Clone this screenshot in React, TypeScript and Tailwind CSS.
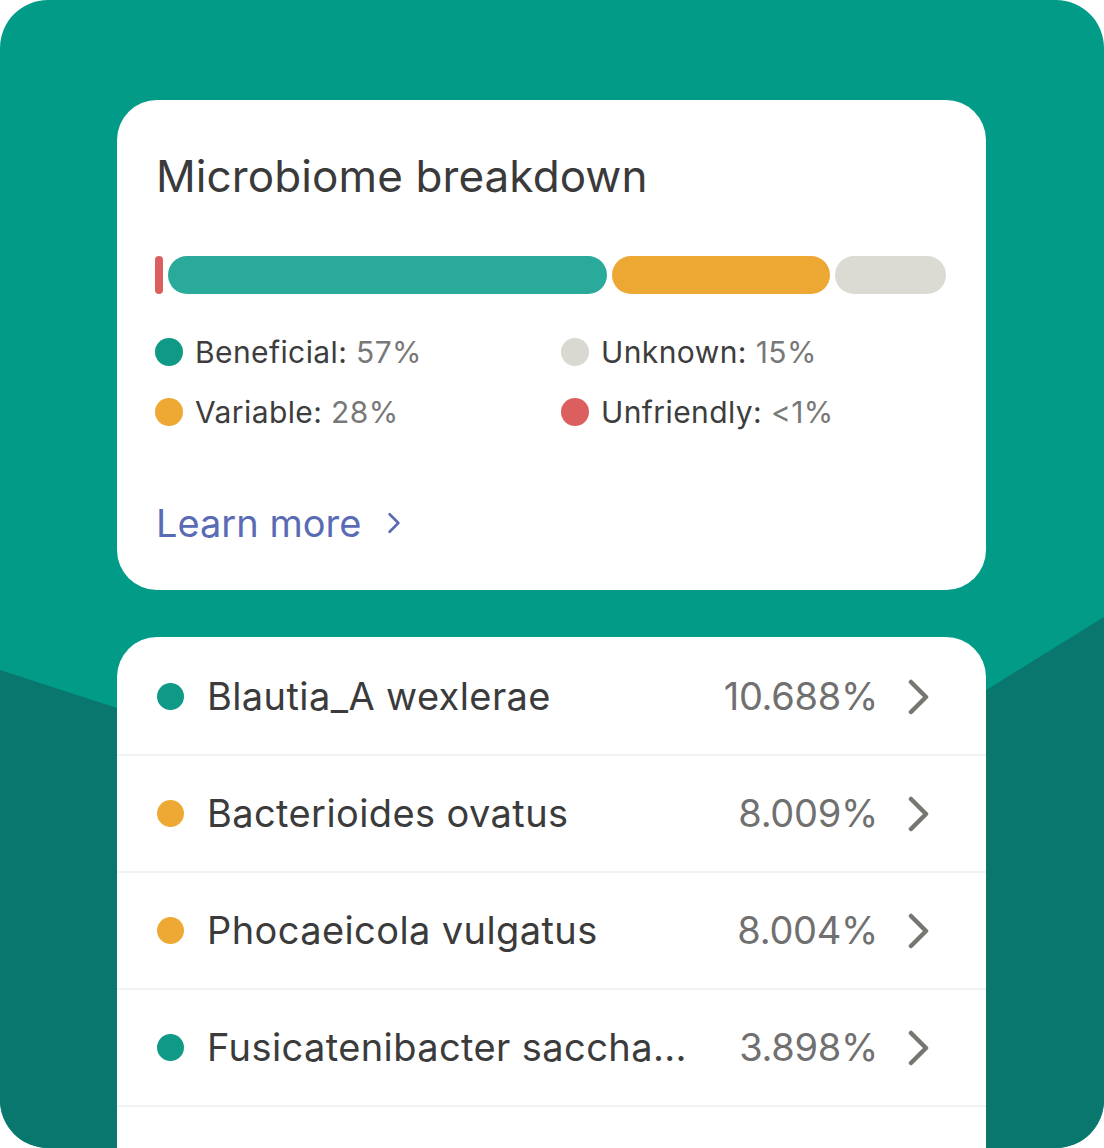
import React from 'react';

type Kind = 'good' | 'var' | 'unk' | 'bad';

const DOT: Record<Kind, string> = {
  good: 'bg-[#0E9A86]',
  var: 'bg-[#EEA935]',
  unk: 'bg-[#D9D9D1]',
  bad: 'bg-[#DC5F5F]',
};

const LEGEND: { kind: Kind; label: string; value: string }[] = [
  { kind: 'good', label: 'Beneficial:', value: '57%' },
  { kind: 'unk', label: 'Unknown:', value: '15%' },
  { kind: 'var', label: 'Variable:', value: '28%' },
  { kind: 'bad', label: 'Unfriendly:', value: '<1%' },
];

const SPECIES: { kind: Kind; name: string; pct: string }[] = [
  { kind: 'good', name: 'Blautia_A wexlerae', pct: '10.688%' },
  { kind: 'var', name: 'Bacterioides ovatus', pct: '8.009%' },
  { kind: 'var', name: 'Phocaeicola vulgatus', pct: '8.004%' },
  { kind: 'good', name: 'Fusicatenibacter saccha...', pct: '3.898%' },
];

function Chevron({ className }: { className?: string }) {
  return (
    <svg viewBox="0 0 22 36" className={className} fill="none">
      <path d="M3 3 L18 18 L3 33" stroke="currentColor" strokeWidth="4.5" strokeLinecap="round" strokeLinejoin="round" />
    </svg>
  );
}

export default function App() {
  return (
    <div className="w-[1104px] h-[1148px] relative overflow-hidden rounded-[48px] bg-[#019B87] font-['Inter','Liberation_Sans',sans-serif]">
      {/* darker backdrop shape */}
      <svg className="absolute inset-0" width="1104" height="1148" viewBox="0 0 1104 1148">
        <polygon points="0,670 668,887 1104,617 1104,1148 0,1148" fill="#0A776E" />
      </svg>

      <div className="relative flex flex-col gap-[47px] pt-[100px] pl-[117px] pr-[118px]">
        {/* Breakdown card */}
        <div className="bg-white rounded-[40px] pl-[38px] pr-[40px] pt-[54px] pb-[44px]">
          <h2 className="text-[44px] leading-none text-[#3A3A3A] pl-[1px] tracking-[0.1px]">Microbiome breakdown</h2>

          <div className="flex gap-[5px] h-[38px] mt-[58px]">
            <div className="w-[8px] rounded-full bg-[#DC5F5F]" />
            <div className="w-[439px] rounded-full bg-[#2AAA9B]" />
            <div className="w-[218px] rounded-full bg-[#EDA834]" />
            <div className="flex-1 rounded-full bg-[#DBDBD3]" />
          </div>

          <div className="grid grid-cols-[406px_1fr] gap-y-[20px] mt-[38px]">
            {LEGEND.map((l) => (
              <div key={l.label} className="flex items-center h-[40px] gap-[12px]">
                <span className={`w-[28px] h-[28px] rounded-full ${DOT[l.kind]}`} />
                <span className="text-[30px] text-[#3D3D3D] tracking-[0.4px]">
                  {l.label} <span className="text-[#787878]">{l.value}</span>
                </span>
              </div>
            ))}
          </div>

          <a className="flex items-center gap-[26px] mt-[68px] h-[46px] text-[38px] text-[#5A6BB5] pl-[1px]">
            Learn more
            <svg viewBox="0 0 16 26" className="w-[14px] h-[24px]" fill="none">
              <path d="M3 3 L13 13 L3 23" stroke="currentColor" strokeWidth="3" strokeLinecap="round" strokeLinejoin="round" />
            </svg>
          </a>
        </div>

        {/* Species list */}
        <div className="bg-white rounded-t-[40px] pt-[2px]">
          {SPECIES.map((s) => (
            <div key={s.name} className="flex items-center h-[117px] border-b-2 border-[#F2F2F2] pl-[40px] pr-[56px]">
              <span className={`w-[27px] h-[27px] rounded-full shrink-0 ${DOT[s.kind]}`} />
              <span className="ml-[23px] flex-1 text-[38px] tracking-[0.4px] text-[#3B3B3B] whitespace-nowrap">{s.name}</span>
              <span className="text-[38px] tracking-[-0.3px] text-[#707070]">{s.pct}</span>
              <Chevron className="ml-[30px] w-[22px] h-[36px] text-[#777772]" />
            </div>
          ))}
          {/* next row, only its chevron peeks into view */}
          <div className="flex items-center justify-end h-[117px] pr-[56px]">
            <Chevron className="w-[22px] h-[36px] text-[#777772]" />
          </div>
        </div>
      </div>
    </div>
  );
}
